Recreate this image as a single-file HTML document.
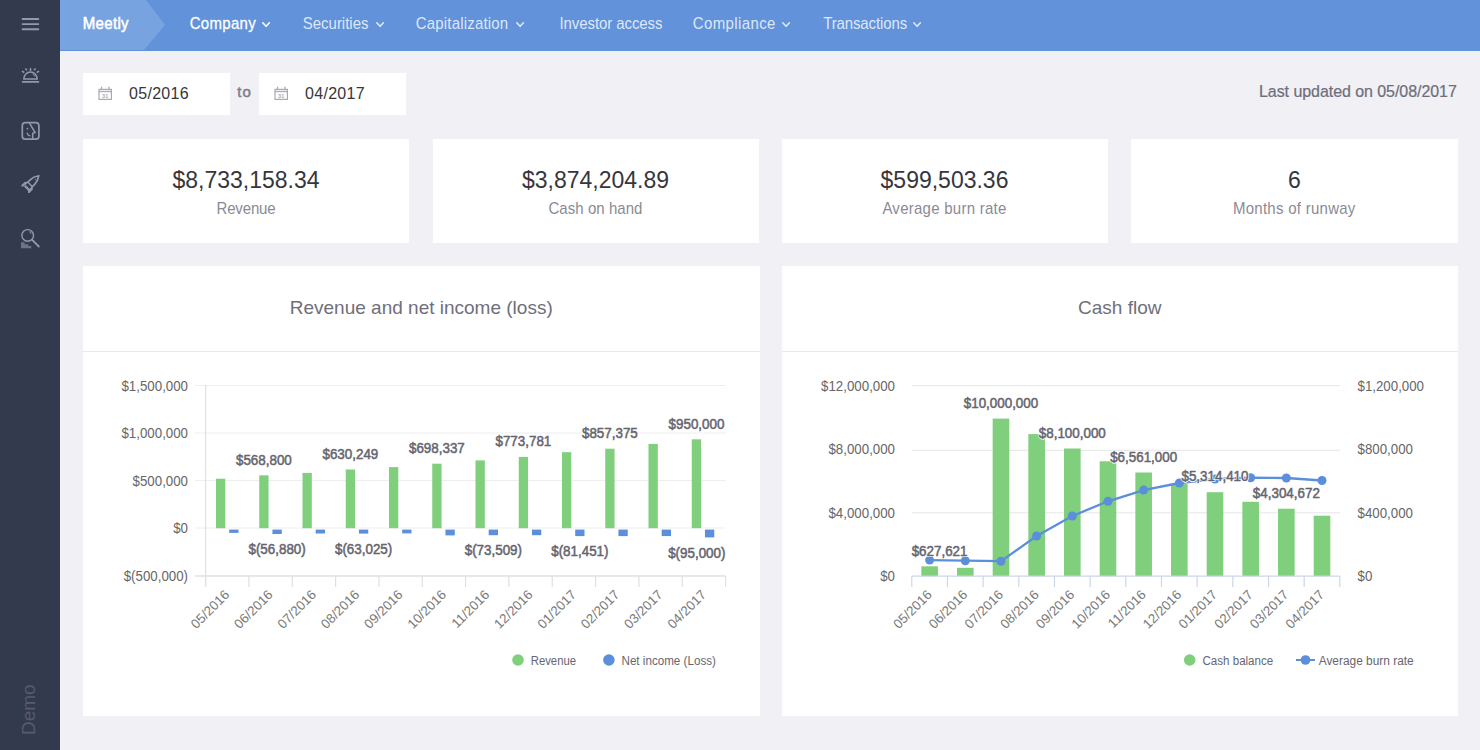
<!DOCTYPE html>
<html><head><meta charset="utf-8">
<style>
* { margin:0; padding:0; box-sizing:border-box; }
html,body { width:1480px; height:750px; overflow:hidden; background:#f0f0f5; font-family:"Liberation Sans", sans-serif; }
.abs { position:absolute; white-space:nowrap; }
#side { position:absolute; left:0; top:0; width:60px; height:750px; background:#343a4e; }
#top { position:absolute; left:60px; top:0; width:1420px; height:50.5px; background:#6192da; }
.nav { position:absolute; top:0; height:50px; line-height:48px; font-size:15px; color:rgba(255,255,255,0.78); transform:scaleY(1.06); transform-origin:0 29.2px; }
.nav svg { position:absolute; top:21px; }
.card { position:absolute; background:#fff; }
.kv { position:absolute; left:0; right:0; text-align:center; font-size:23px; color:#36363c; top:27px; line-height:28px; transform:scaleY(1.05); transform-origin:50% 22px; }
.kl { position:absolute; left:0; right:0; text-align:center; font-size:15px; color:#8a8a97; top:60.7px; line-height:18px; transform:scaleY(1.06); transform-origin:50% 14.2px; }
.ctitle { position:absolute; left:0; right:0; top:0; height:86.3px; text-align:center; line-height:84px; font-size:19px; color:#6f6f7c; border-bottom:1.5px solid #e9e9ee; }
#charts { position:absolute; left:0; top:0; }
#charts text { font-family:"Liberation Sans", sans-serif; }
</style></head><body>
<div id="side">
  <svg width="60" height="260" style="position:absolute;left:0;top:0" fill="none" stroke="#9398ac">
    <path d="M22.6 19H38.3M22.6 24.1H38.3M22.6 29.2H38.3" stroke-width="1.9" stroke-linecap="round"/>
    <path d="M22.7 81.9H38.3" stroke-width="1.9" stroke-linecap="round"/>
    <path d="M23.9 79.1V78.6A6.6 6.6 0 0 1 37.1 78.6V79.1Z" stroke-width="1.5"/>
    <path d="M32.6 73.9A4.8 4.8 0 0 1 34.9 76.4" stroke-width="0.9"/>
    <path d="M30.5 68V71M25.4 68.5L27 70.3M35.6 68.5L34 70.3M21.9 71.1L24.3 72.5M39.1 71.1L36.7 72.5" stroke-width="1.5"/>
    <rect x="22.3" y="122.7" width="16.6" height="16.5" rx="3" stroke-width="1.7"/>
    <path d="M29.4 122.8L35.1 132.5L32.7 133.3V139.5" stroke-width="1.5"/>
    <circle cx="27.4" cy="128.6" r="0.9" fill="#9398ac" stroke="none"/>
    <path d="M27.2 133.2Q27.8 135.3 29.9 135.8" stroke-width="1.3" stroke-linecap="round"/>
    <g transform="translate(30.3 184.2) rotate(45)">
      <path d="M-3.2 0.8V-3C-3.2 -6.5 -1.6 -9.8 0 -12C1.6 -9.8 3.2 -6.5 3.2 -3V0.8" stroke-width="1.7" stroke-linejoin="round"/>
      <path d="M-3.3 0.3H3.3" stroke-width="1.5"/>
      <path d="M-2.6 -0.8L-5.6 2V6.9L-4.7 7.9L-2.8 6.1ZM2.6 -0.8L5.6 2V6.9L4.7 7.9L2.8 6.1ZM-3.2 3.8H3.2V6.2H-3.2Z" fill="#9398ac" stroke="none"/>
      <path d="M0.1 -7.4L0.7 -6.6" stroke-width="0.9"/>
    </g>
    <circle cx="27.7" cy="235.4" r="5.8" stroke-width="1.4"/>
    <path d="M29.4 231.6A3.6 3.6 0 0 1 31.2 233.6" stroke-width="1.1" opacity="0.8"/>
    <path d="M32.2 239.9L38.8 246.5" stroke-width="1.8" stroke-linecap="round"/>
    <path d="M21 242.2H24.6V244.2H28.2V246H31.2V248.2H21Z" fill="#9398ac" stroke="none" opacity="0.62"/>
  </svg>
  <div class="abs" style="left:19px;top:735px;width:60px;height:20px;font-size:19px;line-height:20px;color:#555b70;transform:rotate(-90deg);transform-origin:0 0;">Demo</div>
</div>
<div id="top">
  <svg width="110" height="50" style="position:absolute;left:0;top:0"><polygon points="0,0 86,0 105,25 84,50 0,50" fill="#77a4e0"/></svg>
  <div class="nav" style="left:22.7px;color:#fff;letter-spacing:0.35px;-webkit-text-stroke:0.5px #fff;">Meetly</div>
  <div class="nav" style="left:129.7px;color:#fff;letter-spacing:0.3px;-webkit-text-stroke:0.25px #fff;">Company</div>
  <svg width="12" height="10" style="position:absolute;left:201.0px;top:21px"><path d="M1.8 1.8L5.1 5.3L8.4 1.8" stroke="#fff" stroke-width="1.6" fill="none" stroke-linecap="round" stroke-linejoin="round"/></svg>
  <div class="nav" style="left:242.7px;color:rgba(255,255,255,0.8);letter-spacing:0px;">Securities</div>
  <svg width="12" height="10" style="position:absolute;left:315.0px;top:21px"><path d="M1.8 1.8L5.1 5.3L8.4 1.8" stroke="rgba(255,255,255,0.8)" stroke-width="1.6" fill="none" stroke-linecap="round" stroke-linejoin="round"/></svg>
  <div class="nav" style="left:355.7px;color:rgba(255,255,255,0.8);letter-spacing:0.19px;">Capitalization</div>
  <svg width="12" height="10" style="position:absolute;left:454.7px;top:21px"><path d="M1.8 1.8L5.1 5.3L8.4 1.8" stroke="rgba(255,255,255,0.8)" stroke-width="1.6" fill="none" stroke-linecap="round" stroke-linejoin="round"/></svg>
  <div class="nav" style="left:499.5px;color:rgba(255,255,255,0.8);letter-spacing:-0.09px;">Investor access</div>
  <div class="nav" style="left:632.8px;color:rgba(255,255,255,0.8);letter-spacing:0.38px;">Compliance</div>
  <svg width="12" height="10" style="position:absolute;left:721.0px;top:21px"><path d="M1.8 1.8L5.1 5.3L8.4 1.8" stroke="rgba(255,255,255,0.8)" stroke-width="1.6" fill="none" stroke-linecap="round" stroke-linejoin="round"/></svg>
  <div class="nav" style="left:763.2px;color:rgba(255,255,255,0.8);letter-spacing:-0.125px;">Transactions</div>
  <svg width="12" height="10" style="position:absolute;left:852.4px;top:21px"><path d="M1.8 1.8L5.1 5.3L8.4 1.8" stroke="rgba(255,255,255,0.8)" stroke-width="1.6" fill="none" stroke-linecap="round" stroke-linejoin="round"/></svg>
</div>

<div class="card" style="left:83px;top:73px;width:147px;height:42px;">
  <svg width="16" height="16" style="position:absolute;left:15px;top:13px" fill="none" stroke="#a9a9b3" stroke-width="1.2"><rect x="1" y="3.4" width="12.4" height="10"/><path d="M1 5.5H13.4" stroke-width="1.3"/><path d="M3.5 0.8V3.4M11 0.8V3.4" stroke-width="1.3"/><text x="7.2" y="11.5" font-size="5.6" font-weight="bold" fill="#a9a9b3" stroke="none" text-anchor="middle" font-family="Liberation Sans">31</text></svg>
  <div class="abs" style="left:46px;top:12px;font-size:16px;line-height:18px;color:#36363b;letter-spacing:0.3px;">05/2016</div>
</div>
<div class="abs" style="left:237.3px;top:82.5px;font-size:15px;line-height:18px;color:#7c7c8a;letter-spacing:1px;-webkit-text-stroke:0.45px #7c7c8a;">to</div>
<div class="card" style="left:259px;top:73px;width:147px;height:42px;">
  <svg width="16" height="16" style="position:absolute;left:15px;top:13px" fill="none" stroke="#a9a9b3" stroke-width="1.2"><rect x="1" y="3.4" width="12.4" height="10"/><path d="M1 5.5H13.4" stroke-width="1.3"/><path d="M3.5 0.8V3.4M11 0.8V3.4" stroke-width="1.3"/><text x="7.2" y="11.5" font-size="5.6" font-weight="bold" fill="#a9a9b3" stroke="none" text-anchor="middle" font-family="Liberation Sans">31</text></svg>
  <div class="abs" style="left:46px;top:12px;font-size:16px;line-height:18px;color:#36363b;letter-spacing:0.3px;">04/2017</div>
</div>
<div class="abs" style="left:1259px;top:82.5px;font-size:16px;line-height:18px;color:#6e6e7b;letter-spacing:-0.06px;transform:scaleY(1.045);transform-origin:0 14.55px;-webkit-text-stroke:0.2px #6e6e7b;">Last updated on 05/08/2017</div>

<div class="card" style="left:83px;top:139px;width:326px;height:104px;"><div class="kv">$8,733,158.34</div><div class="kl" style="letter-spacing:-0.15px">Revenue</div></div>
<div class="card" style="left:432.5px;top:139px;width:326px;height:104px;"><div class="kv">$3,874,204.89</div><div class="kl" style="letter-spacing:0.05px">Cash on hand</div></div>
<div class="card" style="left:781.5px;top:139px;width:326px;height:104px;"><div class="kv">$599,503.36</div><div class="kl" style="letter-spacing:0.26px">Average burn rate</div></div>
<div class="card" style="left:1130.6px;top:139px;width:327.4px;height:104px;"><div class="kv">6</div><div class="kl" style="letter-spacing:0.27px">Months of runway</div></div>

<div class="card" style="left:83px;top:266px;width:676.5px;height:450px;"><div class="ctitle">Revenue and net income (loss)</div></div>
<div class="card" style="left:781.5px;top:266px;width:676.5px;height:450px;"><div class="ctitle">Cash flow</div></div>

<svg id="charts" width="1480" height="750" viewBox="0 0 1480 750">
<line x1="195" y1="385.5" x2="725.6" y2="385.5" stroke="#eeeeee" stroke-width="1"/>
<line x1="195" y1="433" x2="725.6" y2="433" stroke="#eeeeee" stroke-width="1"/>
<line x1="195" y1="480.5" x2="725.6" y2="480.5" stroke="#eeeeee" stroke-width="1"/>
<line x1="195" y1="528" x2="725.6" y2="528" stroke="#eeeeee" stroke-width="1"/>
<line x1="195" y1="575.5" x2="725.6" y2="575.5" stroke="#eeeeee" stroke-width="1"/>
<line x1="205.6" y1="385" x2="205.6" y2="587" stroke="#e0e0e0" stroke-width="1.2"/>
<line x1="195" y1="576.2" x2="725.6" y2="576.2" stroke="#e0e0e0" stroke-width="1.2"/>
<line x1="205.60" y1="576" x2="205.60" y2="587" stroke="#e0e0e0" stroke-width="1.2"/>
<line x1="248.93" y1="576" x2="248.93" y2="587" stroke="#e0e0e0" stroke-width="1.2"/>
<line x1="292.26" y1="576" x2="292.26" y2="587" stroke="#e0e0e0" stroke-width="1.2"/>
<line x1="335.59" y1="576" x2="335.59" y2="587" stroke="#e0e0e0" stroke-width="1.2"/>
<line x1="378.92" y1="576" x2="378.92" y2="587" stroke="#e0e0e0" stroke-width="1.2"/>
<line x1="422.25" y1="576" x2="422.25" y2="587" stroke="#e0e0e0" stroke-width="1.2"/>
<line x1="465.58" y1="576" x2="465.58" y2="587" stroke="#e0e0e0" stroke-width="1.2"/>
<line x1="508.91" y1="576" x2="508.91" y2="587" stroke="#e0e0e0" stroke-width="1.2"/>
<line x1="552.24" y1="576" x2="552.24" y2="587" stroke="#e0e0e0" stroke-width="1.2"/>
<line x1="595.57" y1="576" x2="595.57" y2="587" stroke="#e0e0e0" stroke-width="1.2"/>
<line x1="638.90" y1="576" x2="638.90" y2="587" stroke="#e0e0e0" stroke-width="1.2"/>
<line x1="682.23" y1="576" x2="682.23" y2="587" stroke="#e0e0e0" stroke-width="1.2"/>
<line x1="725.56" y1="576" x2="725.56" y2="587" stroke="#e0e0e0" stroke-width="1.2"/>
<text transform="translate(188 390.9) scale(0.9300699300699301 1)" x="0" y="0" font-size="14.3" fill="#666666" text-anchor="end" font-weight="normal" >$1,500,000</text>
<text transform="translate(188 438.4) scale(0.9300699300699301 1)" x="0" y="0" font-size="14.3" fill="#666666" text-anchor="end" font-weight="normal" >$1,000,000</text>
<text transform="translate(188 485.9) scale(0.9300699300699301 1)" x="0" y="0" font-size="14.3" fill="#666666" text-anchor="end" font-weight="normal" >$500,000</text>
<text transform="translate(188 533.4) scale(0.9300699300699301 1)" x="0" y="0" font-size="14.3" fill="#666666" text-anchor="end" font-weight="normal" >$0</text>
<text transform="translate(188 580.9) scale(0.9300699300699301 1)" x="0" y="0" font-size="14.3" fill="#666666" text-anchor="end" font-weight="normal" >$(500,000)</text>
<rect x="216.00" y="478.7" width="9.3" height="49.50" fill="#7fcf7d"/>
<rect x="229.20" y="529.6" width="9.3" height="3.30" fill="#5b8fdb"/>
<rect x="259.25" y="475.3" width="9.3" height="52.90" fill="#7fcf7d"/>
<rect x="272.45" y="529.6" width="9.3" height="4.40" fill="#5b8fdb"/>
<rect x="302.50" y="472.9" width="9.3" height="55.30" fill="#7fcf7d"/>
<rect x="315.70" y="529.6" width="9.3" height="3.90" fill="#5b8fdb"/>
<rect x="345.75" y="469.5" width="9.3" height="58.70" fill="#7fcf7d"/>
<rect x="358.95" y="529.6" width="9.3" height="4.00" fill="#5b8fdb"/>
<rect x="389.00" y="467.1" width="9.3" height="61.10" fill="#7fcf7d"/>
<rect x="402.20" y="529.6" width="9.3" height="3.80" fill="#5b8fdb"/>
<rect x="432.25" y="463.7" width="9.3" height="64.50" fill="#7fcf7d"/>
<rect x="445.45" y="529.6" width="9.3" height="5.80" fill="#5b8fdb"/>
<rect x="475.50" y="460.4" width="9.3" height="67.80" fill="#7fcf7d"/>
<rect x="488.70" y="529.6" width="9.3" height="5.60" fill="#5b8fdb"/>
<rect x="518.75" y="456.9" width="9.3" height="71.30" fill="#7fcf7d"/>
<rect x="531.95" y="529.6" width="9.3" height="5.60" fill="#5b8fdb"/>
<rect x="562.00" y="452.2" width="9.3" height="76.00" fill="#7fcf7d"/>
<rect x="575.20" y="529.6" width="9.3" height="6.50" fill="#5b8fdb"/>
<rect x="605.25" y="448.7" width="9.3" height="79.50" fill="#7fcf7d"/>
<rect x="618.45" y="529.6" width="9.3" height="6.50" fill="#5b8fdb"/>
<rect x="648.50" y="443.9" width="9.3" height="84.30" fill="#7fcf7d"/>
<rect x="661.70" y="529.6" width="9.3" height="6.50" fill="#5b8fdb"/>
<rect x="691.75" y="439.3" width="9.3" height="88.90" fill="#7fcf7d"/>
<rect x="704.95" y="529.6" width="9.3" height="7.80" fill="#5b8fdb"/>
<text transform="translate(263.90 464.60) scale(0.9640287769784173 1)" x="0" y="0" font-size="13.9" fill="#65656f" text-anchor="middle" font-weight="normal" stroke="#65656f" stroke-width="0.5">$568,800</text>
<text transform="translate(350.40 458.80) scale(0.9640287769784173 1)" x="0" y="0" font-size="13.9" fill="#65656f" text-anchor="middle" font-weight="normal" stroke="#65656f" stroke-width="0.5">$630,249</text>
<text transform="translate(436.90 453.00) scale(0.9640287769784173 1)" x="0" y="0" font-size="13.9" fill="#65656f" text-anchor="middle" font-weight="normal" stroke="#65656f" stroke-width="0.5">$698,337</text>
<text transform="translate(523.40 446.20) scale(0.9640287769784173 1)" x="0" y="0" font-size="13.9" fill="#65656f" text-anchor="middle" font-weight="normal" stroke="#65656f" stroke-width="0.5">$773,781</text>
<text transform="translate(609.90 438.00) scale(0.9640287769784173 1)" x="0" y="0" font-size="13.9" fill="#65656f" text-anchor="middle" font-weight="normal" stroke="#65656f" stroke-width="0.5">$857,375</text>
<text transform="translate(696.50 428.60) scale(0.9640287769784173 1)" x="0" y="0" font-size="13.9" fill="#65656f" text-anchor="middle" font-weight="normal" stroke="#65656f" stroke-width="0.5">$950,000</text>
<text transform="translate(277.10 554.10) scale(0.9640287769784173 1)" x="0" y="0" font-size="13.9" fill="#65656f" text-anchor="middle" font-weight="normal" stroke="#65656f" stroke-width="0.5">$(56,880)</text>
<text transform="translate(363.60 553.70) scale(0.9640287769784173 1)" x="0" y="0" font-size="13.9" fill="#65656f" text-anchor="middle" font-weight="normal" stroke="#65656f" stroke-width="0.5">$(63,025)</text>
<text transform="translate(493.35 555.30) scale(0.9640287769784173 1)" x="0" y="0" font-size="13.9" fill="#65656f" text-anchor="middle" font-weight="normal" stroke="#65656f" stroke-width="0.5">$(73,509)</text>
<text transform="translate(579.85 556.20) scale(0.9640287769784173 1)" x="0" y="0" font-size="13.9" fill="#65656f" text-anchor="middle" font-weight="normal" stroke="#65656f" stroke-width="0.5">$(81,451)</text>
<text transform="translate(696.80 557.50) scale(0.9640287769784173 1)" x="0" y="0" font-size="13.9" fill="#65656f" text-anchor="middle" font-weight="normal" stroke="#65656f" stroke-width="0.5">$(95,000)</text>
<text x="230.26" y="595.5" font-size="13.3" fill="#7a7a7a" text-anchor="end" font-weight="normal" transform="rotate(-45 230.26 595.5)">05/2016</text>
<text x="273.60" y="595.5" font-size="13.3" fill="#7a7a7a" text-anchor="end" font-weight="normal" transform="rotate(-45 273.60 595.5)">06/2016</text>
<text x="316.92" y="595.5" font-size="13.3" fill="#7a7a7a" text-anchor="end" font-weight="normal" transform="rotate(-45 316.92 595.5)">07/2016</text>
<text x="360.25" y="595.5" font-size="13.3" fill="#7a7a7a" text-anchor="end" font-weight="normal" transform="rotate(-45 360.25 595.5)">08/2016</text>
<text x="403.58" y="595.5" font-size="13.3" fill="#7a7a7a" text-anchor="end" font-weight="normal" transform="rotate(-45 403.58 595.5)">09/2016</text>
<text x="446.91" y="595.5" font-size="13.3" fill="#7a7a7a" text-anchor="end" font-weight="normal" transform="rotate(-45 446.91 595.5)">10/2016</text>
<text x="490.25" y="595.5" font-size="13.3" fill="#7a7a7a" text-anchor="end" font-weight="normal" transform="rotate(-45 490.25 595.5)">11/2016</text>
<text x="533.57" y="595.5" font-size="13.3" fill="#7a7a7a" text-anchor="end" font-weight="normal" transform="rotate(-45 533.57 595.5)">12/2016</text>
<text x="576.90" y="595.5" font-size="13.3" fill="#7a7a7a" text-anchor="end" font-weight="normal" transform="rotate(-45 576.90 595.5)">01/2017</text>
<text x="620.24" y="595.5" font-size="13.3" fill="#7a7a7a" text-anchor="end" font-weight="normal" transform="rotate(-45 620.24 595.5)">02/2017</text>
<text x="663.56" y="595.5" font-size="13.3" fill="#7a7a7a" text-anchor="end" font-weight="normal" transform="rotate(-45 663.56 595.5)">03/2017</text>
<text x="706.89" y="595.5" font-size="13.3" fill="#7a7a7a" text-anchor="end" font-weight="normal" transform="rotate(-45 706.89 595.5)">04/2017</text>
<line x1="911.8" y1="385.6" x2="1339.84" y2="385.6" stroke="#e6e6e6" stroke-width="1"/>
<line x1="911.8" y1="450.3" x2="1339.84" y2="450.3" stroke="#e6e6e6" stroke-width="1"/>
<line x1="911.8" y1="512.8" x2="1339.84" y2="512.8" stroke="#e6e6e6" stroke-width="1"/>
<text transform="translate(895 390.9) scale(0.9300699300699301 1)" x="0" y="0" font-size="14.3" fill="#666666" text-anchor="end" font-weight="normal" >$12,000,000</text>
<text transform="translate(895 454.4) scale(0.9300699300699301 1)" x="0" y="0" font-size="14.3" fill="#666666" text-anchor="end" font-weight="normal" >$8,000,000</text>
<text transform="translate(895 517.9) scale(0.9300699300699301 1)" x="0" y="0" font-size="14.3" fill="#666666" text-anchor="end" font-weight="normal" >$4,000,000</text>
<text transform="translate(895 581.4) scale(0.9300699300699301 1)" x="0" y="0" font-size="14.3" fill="#666666" text-anchor="end" font-weight="normal" >$0</text>
<text transform="translate(1357.5 390.9) scale(0.9300699300699301 1)" x="0" y="0" font-size="14.3" fill="#666666" text-anchor="start" font-weight="normal" >$1,200,000</text>
<text transform="translate(1357.5 454.4) scale(0.9300699300699301 1)" x="0" y="0" font-size="14.3" fill="#666666" text-anchor="start" font-weight="normal" >$800,000</text>
<text transform="translate(1357.5 517.9) scale(0.9300699300699301 1)" x="0" y="0" font-size="14.3" fill="#666666" text-anchor="start" font-weight="normal" >$400,000</text>
<text transform="translate(1357.5 581.4) scale(0.9300699300699301 1)" x="0" y="0" font-size="14.3" fill="#666666" text-anchor="start" font-weight="normal" >$0</text>
<rect x="921.34" y="566.3" width="16.6" height="9.90" fill="#7fcf7d"/>
<rect x="957.00" y="567.8" width="16.6" height="8.40" fill="#7fcf7d"/>
<rect x="992.67" y="418.6" width="16.6" height="157.60" fill="#7fcf7d"/>
<rect x="1028.35" y="434.1" width="16.6" height="142.10" fill="#7fcf7d"/>
<rect x="1064.02" y="448.5" width="16.6" height="127.70" fill="#7fcf7d"/>
<rect x="1099.68" y="461.3" width="16.6" height="114.90" fill="#7fcf7d"/>
<rect x="1135.36" y="472.5" width="16.6" height="103.70" fill="#7fcf7d"/>
<rect x="1171.03" y="483.7" width="16.6" height="92.50" fill="#7fcf7d"/>
<rect x="1206.69" y="492.2" width="16.6" height="84.00" fill="#7fcf7d"/>
<rect x="1242.37" y="501.8" width="16.6" height="74.40" fill="#7fcf7d"/>
<rect x="1278.04" y="508.7" width="16.6" height="67.50" fill="#7fcf7d"/>
<rect x="1313.71" y="515.7" width="16.6" height="60.50" fill="#7fcf7d"/>
<line x1="911.8" y1="576.2" x2="1339.84" y2="576.2" stroke="#ccd6eb" stroke-width="1.2"/>
<line x1="911.80" y1="576" x2="911.80" y2="587" stroke="#ccd6eb" stroke-width="1.2"/>
<line x1="947.47" y1="576" x2="947.47" y2="587" stroke="#ccd6eb" stroke-width="1.2"/>
<line x1="983.14" y1="576" x2="983.14" y2="587" stroke="#ccd6eb" stroke-width="1.2"/>
<line x1="1018.81" y1="576" x2="1018.81" y2="587" stroke="#ccd6eb" stroke-width="1.2"/>
<line x1="1054.48" y1="576" x2="1054.48" y2="587" stroke="#ccd6eb" stroke-width="1.2"/>
<line x1="1090.15" y1="576" x2="1090.15" y2="587" stroke="#ccd6eb" stroke-width="1.2"/>
<line x1="1125.82" y1="576" x2="1125.82" y2="587" stroke="#ccd6eb" stroke-width="1.2"/>
<line x1="1161.49" y1="576" x2="1161.49" y2="587" stroke="#ccd6eb" stroke-width="1.2"/>
<line x1="1197.16" y1="576" x2="1197.16" y2="587" stroke="#ccd6eb" stroke-width="1.2"/>
<line x1="1232.83" y1="576" x2="1232.83" y2="587" stroke="#ccd6eb" stroke-width="1.2"/>
<line x1="1268.50" y1="576" x2="1268.50" y2="587" stroke="#ccd6eb" stroke-width="1.2"/>
<line x1="1304.17" y1="576" x2="1304.17" y2="587" stroke="#ccd6eb" stroke-width="1.2"/>
<line x1="1339.84" y1="576" x2="1339.84" y2="587" stroke="#ccd6eb" stroke-width="1.2"/>
<polyline points="929.63,560.1 965.30,560.7 1000.97,561.2 1036.64,536 1072.32,516 1107.98,501.3 1143.65,490.1 1179.33,483.0 1214.99,479.0 1250.66,477.7 1286.34,478.0 1322.01,480.5" fill="none" stroke="#5b8fdb" stroke-width="2.3" stroke-linejoin="round"/>
<circle cx="929.63" cy="560.1" r="4.5" fill="#5b8fdb"/>
<circle cx="965.30" cy="560.7" r="4.5" fill="#5b8fdb"/>
<circle cx="1000.97" cy="561.2" r="4.5" fill="#5b8fdb"/>
<circle cx="1036.64" cy="536" r="4.5" fill="#5b8fdb"/>
<circle cx="1072.32" cy="516" r="4.5" fill="#5b8fdb"/>
<circle cx="1107.98" cy="501.3" r="4.5" fill="#5b8fdb"/>
<circle cx="1143.65" cy="490.1" r="4.5" fill="#5b8fdb"/>
<circle cx="1179.33" cy="483.0" r="4.5" fill="#5b8fdb"/>
<circle cx="1214.99" cy="479.0" r="4.5" fill="#5b8fdb"/>
<circle cx="1250.66" cy="477.7" r="4.5" fill="#5b8fdb"/>
<circle cx="1286.34" cy="478.0" r="4.5" fill="#5b8fdb"/>
<circle cx="1322.01" cy="480.5" r="4.5" fill="#5b8fdb"/>
<text transform="translate(939.60 555.50) scale(0.9640287769784173 1)" x="0" y="0" font-size="13.9" fill="#65656f" text-anchor="middle" font-weight="normal" stroke="#ffffff" stroke-width="2" stroke-linejoin="round">$627,621</text>
<text transform="translate(939.60 555.50) scale(0.9640287769784173 1)" x="0" y="0" font-size="13.9" fill="#65656f" text-anchor="middle" font-weight="normal" stroke="#65656f" stroke-width="0.5">$627,621</text>
<text transform="translate(1000.97 407.80) scale(0.9640287769784173 1)" x="0" y="0" font-size="13.9" fill="#65656f" text-anchor="middle" font-weight="normal" stroke="#ffffff" stroke-width="2" stroke-linejoin="round">$10,000,000</text>
<text transform="translate(1000.97 407.80) scale(0.9640287769784173 1)" x="0" y="0" font-size="13.9" fill="#65656f" text-anchor="middle" font-weight="normal" stroke="#65656f" stroke-width="0.5">$10,000,000</text>
<text transform="translate(1072.32 437.70) scale(0.9640287769784173 1)" x="0" y="0" font-size="13.9" fill="#65656f" text-anchor="middle" font-weight="normal" stroke="#ffffff" stroke-width="2" stroke-linejoin="round">$8,100,000</text>
<text transform="translate(1072.32 437.70) scale(0.9640287769784173 1)" x="0" y="0" font-size="13.9" fill="#65656f" text-anchor="middle" font-weight="normal" stroke="#65656f" stroke-width="0.5">$8,100,000</text>
<text transform="translate(1143.65 461.70) scale(0.9640287769784173 1)" x="0" y="0" font-size="13.9" fill="#65656f" text-anchor="middle" font-weight="normal" stroke="#ffffff" stroke-width="2" stroke-linejoin="round">$6,561,000</text>
<text transform="translate(1143.65 461.70) scale(0.9640287769784173 1)" x="0" y="0" font-size="13.9" fill="#65656f" text-anchor="middle" font-weight="normal" stroke="#65656f" stroke-width="0.5">$6,561,000</text>
<text transform="translate(1214.99 481.40) scale(0.9640287769784173 1)" x="0" y="0" font-size="13.9" fill="#65656f" text-anchor="middle" font-weight="normal" stroke="#ffffff" stroke-width="2" stroke-linejoin="round">$5,314,410</text>
<text transform="translate(1214.99 481.40) scale(0.9640287769784173 1)" x="0" y="0" font-size="13.9" fill="#65656f" text-anchor="middle" font-weight="normal" stroke="#65656f" stroke-width="0.5">$5,314,410</text>
<text transform="translate(1286.34 497.90) scale(0.9640287769784173 1)" x="0" y="0" font-size="13.9" fill="#65656f" text-anchor="middle" font-weight="normal" stroke="#ffffff" stroke-width="2" stroke-linejoin="round">$4,304,672</text>
<text transform="translate(1286.34 497.90) scale(0.9640287769784173 1)" x="0" y="0" font-size="13.9" fill="#65656f" text-anchor="middle" font-weight="normal" stroke="#65656f" stroke-width="0.5">$4,304,672</text>
<text x="932.63" y="595.5" font-size="13.3" fill="#7a7a7a" text-anchor="end" font-weight="normal" transform="rotate(-45 932.63 595.5)">05/2016</text>
<text x="968.30" y="595.5" font-size="13.3" fill="#7a7a7a" text-anchor="end" font-weight="normal" transform="rotate(-45 968.30 595.5)">06/2016</text>
<text x="1003.97" y="595.5" font-size="13.3" fill="#7a7a7a" text-anchor="end" font-weight="normal" transform="rotate(-45 1003.97 595.5)">07/2016</text>
<text x="1039.64" y="595.5" font-size="13.3" fill="#7a7a7a" text-anchor="end" font-weight="normal" transform="rotate(-45 1039.64 595.5)">08/2016</text>
<text x="1075.32" y="595.5" font-size="13.3" fill="#7a7a7a" text-anchor="end" font-weight="normal" transform="rotate(-45 1075.32 595.5)">09/2016</text>
<text x="1110.98" y="595.5" font-size="13.3" fill="#7a7a7a" text-anchor="end" font-weight="normal" transform="rotate(-45 1110.98 595.5)">10/2016</text>
<text x="1146.65" y="595.5" font-size="13.3" fill="#7a7a7a" text-anchor="end" font-weight="normal" transform="rotate(-45 1146.65 595.5)">11/2016</text>
<text x="1182.33" y="595.5" font-size="13.3" fill="#7a7a7a" text-anchor="end" font-weight="normal" transform="rotate(-45 1182.33 595.5)">12/2016</text>
<text x="1217.99" y="595.5" font-size="13.3" fill="#7a7a7a" text-anchor="end" font-weight="normal" transform="rotate(-45 1217.99 595.5)">01/2017</text>
<text x="1253.66" y="595.5" font-size="13.3" fill="#7a7a7a" text-anchor="end" font-weight="normal" transform="rotate(-45 1253.66 595.5)">02/2017</text>
<text x="1289.34" y="595.5" font-size="13.3" fill="#7a7a7a" text-anchor="end" font-weight="normal" transform="rotate(-45 1289.34 595.5)">03/2017</text>
<text x="1325.01" y="595.5" font-size="13.3" fill="#7a7a7a" text-anchor="end" font-weight="normal" transform="rotate(-45 1325.01 595.5)">04/2017</text>
<circle cx="518" cy="660" r="5.8" fill="#7fcf7d"/>
<text x="530.7" y="664.8" font-size="12" fill="#666670" text-anchor="start" font-weight="normal" textLength="45.4" lengthAdjust="spacingAndGlyphs">Revenue</text>
<circle cx="608.9" cy="660" r="5.8" fill="#5b8fdb"/>
<text x="621.5" y="664.8" font-size="12" fill="#666670" text-anchor="start" font-weight="normal" textLength="94.4" lengthAdjust="spacingAndGlyphs">Net income (Loss)</text>
<circle cx="1189.7" cy="660" r="5.8" fill="#7fcf7d"/>
<text x="1202.5" y="664.8" font-size="12" fill="#666670" text-anchor="start" font-weight="normal" textLength="70.7" lengthAdjust="spacingAndGlyphs">Cash balance</text>
<line x1="1296" y1="660" x2="1315" y2="660" stroke="#5b8fdb" stroke-width="2"/>
<circle cx="1305.5" cy="660" r="4.8" fill="#5b8fdb"/>
<text x="1318.7" y="664.8" font-size="12" fill="#666670" text-anchor="start" font-weight="normal" textLength="95" lengthAdjust="spacingAndGlyphs">Average burn rate</text>
</svg>
</body></html>
